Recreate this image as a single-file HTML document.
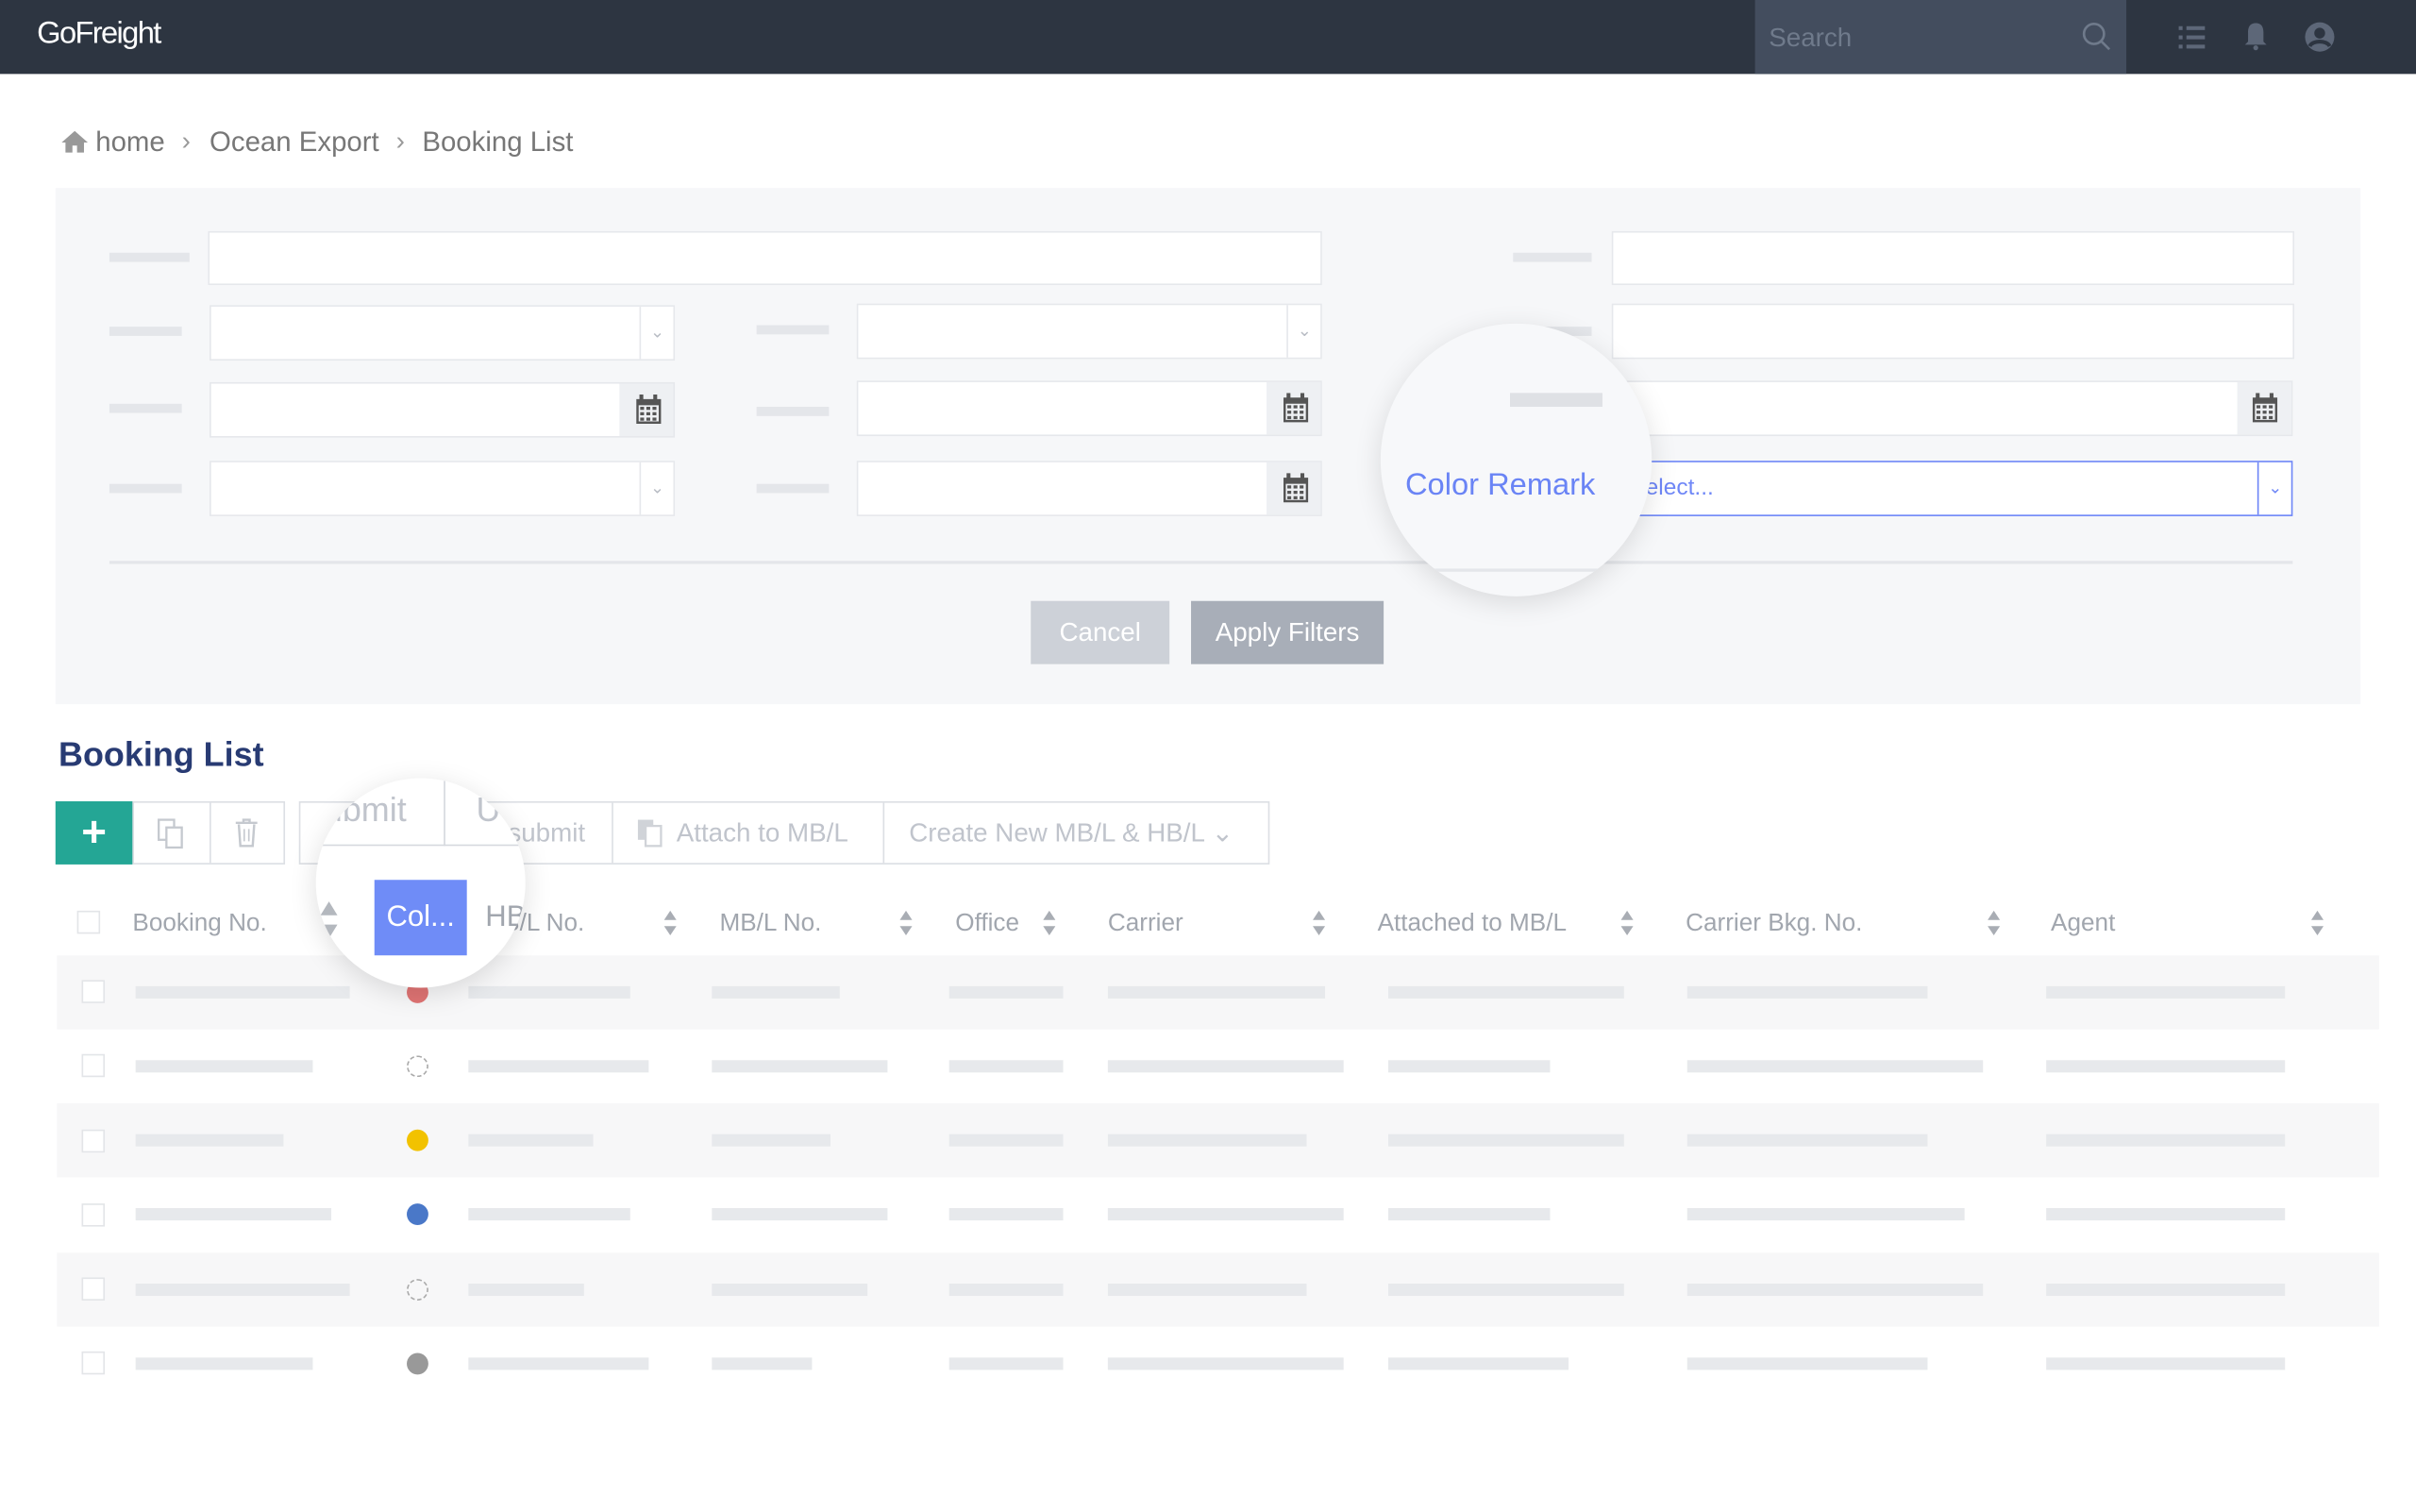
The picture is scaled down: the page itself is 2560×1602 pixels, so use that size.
<!DOCTYPE html>
<html><head><meta charset="utf-8">
<style>
html,body{margin:0;padding:0;width:2560px;height:1601px;overflow:hidden;background:#fff;}
#w{position:absolute;left:0;top:0;width:1568px;height:981px;transform:scale(1.632653);transform-origin:0 0;font-family:"Liberation Sans",sans-serif;}
.a{position:absolute;}
.bar{position:absolute;background:#e4e6ea;height:6px;}
.in{position:absolute;background:#fff;border:1px solid #e6e8ec;box-sizing:border-box;}
.dv{position:absolute;top:0;bottom:0;width:1px;background:#e6e8ec;}
.chev{position:absolute;color:#b8bcc4;font-size:11px;}
.cal{position:absolute;top:0;bottom:0;right:0;width:35px;background:#eef0f3;}
.t{position:absolute;white-space:nowrap;}
.rb{position:absolute;height:8px;background:#e7e9ec;}
.cb{position:absolute;width:15px;height:15px;border:1px solid #e3e5e8;background:#fff;box-sizing:border-box;}
.dot{position:absolute;width:14px;height:14px;border-radius:50%;}
.th{position:absolute;top:591px;color:#a1a6ae;font-size:16px;white-space:nowrap;}
.sort{position:absolute;top:589px;width:8px;height:20px;}
</style></head><body><div id="w">
<div class="a" style="left:0;top:0;width:1568px;height:48px;background:#2d3541;"></div>
<div class="t" style="left:24px;top:11px;color:#fff;font-size:20px;letter-spacing:-1px;">GoFreight</div>
<div class="a" style="left:1139px;top:0;width:241px;height:48px;background:#434d5e;"></div>
<div class="t" style="left:1148px;top:15px;color:#6f7a8b;font-size:17px;">Search</div>
<svg class="a" style="left:1350px;top:13px" width="22" height="22" viewBox="0 0 22 22"><circle cx="9" cy="9" r="6.5" fill="none" stroke="#6f7a8b" stroke-width="1.6"/><path d="M13.5 13.5L19 19" stroke="#6f7a8b" stroke-width="1.6"/></svg>
<svg class="a" style="left:1413px;top:15px" width="20" height="18"><g fill="#5d6778"><rect x="1" y="2" width="2.5" height="2.5"/><rect x="6" y="2" width="12" height="2.5"/><rect x="1" y="8" width="2.5" height="2.5"/><rect x="6" y="8" width="12" height="2.5"/><rect x="1" y="14" width="2.5" height="2.5"/><rect x="6" y="14" width="12" height="2.5"/></g></svg>
<svg class="a" style="left:1455px;top:14px" width="18" height="20"><path d="M9 1c-4 0-5 3-5 6v6l-2 2h14l-2-2V7c0-3-1-6-5-6z" fill="#5d6778"/><circle cx="9" cy="17" r="1.6" fill="#5d6778"/></svg>
<svg class="a" style="left:1495px;top:13px" width="21" height="22"><circle cx="10.5" cy="11" r="9.5" fill="#5d6778"/><circle cx="10.5" cy="8.5" r="3.5" fill="#2d3541"/><path d="M4 17c2-4 11-4 13 0" stroke="#2d3541" stroke-width="2.5" fill="none"/></svg>
<svg class="a" style="left:39px;top:84px" width="19" height="16"><path d="M9.5 1L1 8.5h2.5V15h4.5v-4.5h3V15h4.5V8.5H18z" fill="#999"/></svg>
<div class="t" style="left:62px;top:82px;color:#777;font-size:18px;">home</div>
<div class="t" style="left:118px;top:82px;color:#999;font-size:17px;">&#8250;</div>
<div class="t" style="left:136px;top:82px;color:#777;font-size:18px;">Ocean Export</div>
<div class="t" style="left:257px;top:82px;color:#999;font-size:17px;">&#8250;</div>
<div class="t" style="left:274px;top:82px;color:#777;font-size:18px;">Booking List</div>
<div class="a" style="left:36px;top:122px;width:1496px;height:335px;background:#f6f7f9;"></div>
<div class="bar" style="left:71px;top:164px;width:52px;"></div>
<div class="in" style="left:135px;top:150px;width:723px;height:35px;"></div>
<div class="bar" style="left:982px;top:164px;width:51px;"></div>
<div class="in" style="left:1046px;top:150px;width:443px;height:35px;"></div>
<div class="bar" style="left:71px;top:212px;width:47px;"></div>
<div class="in" style="left:136px;top:198px;width:302px;height:36px;"><div class="dv" style="left:278px"></div><div class="chev" style="left:285px;top:10px;">&#8964;</div></div>
<div class="bar" style="left:491px;top:211px;width:47px;"></div>
<div class="in" style="left:556px;top:197px;width:302px;height:36px;"><div class="dv" style="left:278px"></div><div class="chev" style="left:285px;top:10px;">&#8964;</div></div>
<div class="bar" style="left:982px;top:212px;width:51px;"></div>
<div class="in" style="left:1046px;top:197px;width:443px;height:36px;"></div>
<div class="bar" style="left:71px;top:262px;width:47px;"></div>
<div class="in" style="left:136px;top:248px;width:302px;height:36px;"><div class="cal"></div></div>
<div class="bar" style="left:491px;top:264px;width:47px;"></div>
<div class="in" style="left:556px;top:247px;width:302px;height:36px;"><div class="cal"></div></div>
<div class="in" style="left:1055px;top:247px;width:433px;height:36px;"><div class="cal"></div></div>
<div class="bar" style="left:71px;top:314px;width:47px;"></div>
<div class="in" style="left:136px;top:299px;width:302px;height:36px;"><div class="dv" style="left:278px"></div><div class="chev" style="left:285px;top:10px;">&#8964;</div></div>
<div class="bar" style="left:491px;top:314px;width:47px;"></div>
<div class="in" style="left:556px;top:299px;width:302px;height:36px;"><div class="cal"></div></div>
<div class="a" style="left:1060px;top:299px;width:428px;height:36px;background:#fff;border:1px solid #6f87f7;box-sizing:border-box;"><div class="dv" style="left:404px;background:#6f87f7"></div><div class="chev" style="left:411px;top:10px;color:#6f87f7">&#8964;</div></div>
<div class="t" style="left:1068px;top:308px;color:#6f87f7;font-size:15px;">elect...</div>
<svg width="0" height="0" style="position:absolute"><defs><g id="c" fill="#555"><rect x="3" y="0" width="2.5" height="5"/><rect x="12" y="0" width="2.5" height="5"/><path d="M1 3h16v16H1z M2.5 7v10.5h13V7z" fill-rule="evenodd"/><rect x="3.5" y="8" width="2.5" height="2"/><rect x="7.5" y="8" width="2.5" height="2"/><rect x="11.5" y="8" width="2.5" height="2"/><rect x="3.5" y="11.5" width="2.5" height="2"/><rect x="7.5" y="11.5" width="2.5" height="2"/><rect x="11.5" y="11.5" width="2.5" height="2"/><rect x="3.5" y="15" width="2.5" height="2"/><rect x="7.5" y="15" width="2.5" height="2"/><rect x="11.5" y="15" width="2.5" height="2"/></g><g id="s"><path d="M0 8L4 2L8 8z M0 12L4 18L8 12z" fill="#a9adb4"/></g></defs></svg>
<svg class="a" style="left:412px;top:256px" width="18" height="20"><use href="#c"/></svg>
<svg class="a" style="left:832px;top:255px" width="18" height="20"><use href="#c"/></svg>
<svg class="a" style="left:832px;top:307px" width="18" height="20"><use href="#c"/></svg>
<svg class="a" style="left:1461px;top:255px" width="18" height="20"><use href="#c"/></svg>
<div class="a" style="left:71px;top:364px;width:1417px;height:2px;background:#e4e6ea;"></div>
<div class="a" style="left:896px;top:210px;width:176px;height:177px;border-radius:50%;background:#f7f8fa;box-shadow:0 4px 18px rgba(0,0,0,0.12);overflow:hidden;">
 <div class="a" style="left:84px;top:45px;width:60px;height:9px;background:#dfe1e5;"></div>
 <div class="a" style="left:0;top:159px;width:176px;height:2px;background:#e4e6ea;"></div>
 <div class="t" style="left:16px;top:94px;color:#6a84f5;font-size:20px;">Color Remark</div>
</div>
<div class="a" style="left:669px;top:390px;width:90px;height:41px;background:#cdd1d8;color:#fff;font-size:17px;text-align:center;line-height:41px;">Cancel</div>
<div class="a" style="left:773px;top:390px;width:125px;height:41px;background:#a8aeb8;color:#fff;font-size:17px;text-align:center;line-height:41px;">Apply Filters</div>
<div class="t" style="left:38px;top:477px;color:#283b73;font-size:22px;font-weight:bold;">Booking List</div>
<div class="a" style="left:36px;top:520px;width:50px;height:41px;background:#24a695;color:#fff;font-size:28px;text-align:center;line-height:40px;font-weight:bold;">+</div>
<div class="a" style="left:86px;top:520px;width:99px;height:41px;border:1px solid #dcdfe4;box-sizing:border-box;"><div class="dv" style="left:49px;background:#dcdfe4"></div></div>
<svg class="a" style="left:102px;top:531px" width="18" height="20"><rect x="1" y="1" width="10" height="13" fill="none" stroke="#c5c9cf" stroke-width="1.4"/><rect x="6" y="6" width="10" height="13" fill="#fff" stroke="#c5c9cf" stroke-width="1.4"/></svg>
<svg class="a" style="left:152px;top:531px" width="16" height="19"><path d="M1 3h14M6 3V1h4v2M3 4l1 14h8l1-14" fill="none" stroke="#c5c9cf" stroke-width="1.5"/><path d="M6.5 7v8M9.5 7v8" stroke="#c5c9cf"/></svg>
<div class="a" style="left:194px;top:520px;width:630px;height:41px;border:1px solid #dcdfe4;box-sizing:border-box;"><div class="dv" style="left:202px;background:#dcdfe4"></div><div class="dv" style="left:378px;background:#dcdfe4"></div></div>
<div class="t" style="left:308px;top:531px;color:#c0c4cc;font-size:17px;">Unsubmit</div>
<svg class="a" style="left:413px;top:531px" width="18" height="19"><rect x="1" y="1" width="10" height="13" fill="#d0d3d8"/><rect x="6" y="5" width="10" height="13" fill="#fff" stroke="#d0d3d8" stroke-width="1.4"/></svg>
<div class="t" style="left:439px;top:531px;color:#c0c4cc;font-size:17px;">Attach to MB/L</div>
<div class="t" style="left:590px;top:531px;color:#c0c4cc;font-size:17px;">Create New MB/L &amp; HB/L &#8964;</div>
<div class="cb" style="left:50px;top:591px;"></div>
<div class="th" style="left:86px;">Booking No.</div>
<div class="th" style="left:315px;">HB/L No.</div>
<div class="th" style="left:467px;">MB/L No.</div>
<div class="th" style="left:620px;">Office</div>
<div class="th" style="left:719px;">Carrier</div>
<div class="th" style="left:894px;">Attached to MB/L</div>
<div class="th" style="left:1094px;">Carrier Bkg. No.</div>
<div class="th" style="left:1331px;">Agent</div>
<svg class="sort" style="left:431px"><use href="#s"/></svg>
<svg class="sort" style="left:584px"><use href="#s"/></svg>
<svg class="sort" style="left:677px"><use href="#s"/></svg>
<svg class="sort" style="left:852px"><use href="#s"/></svg>
<svg class="sort" style="left:1052px"><use href="#s"/></svg>
<svg class="sort" style="left:1290px"><use href="#s"/></svg>
<svg class="sort" style="left:1500px"><use href="#s"/></svg>
<div class="a" style="left:37px;top:620px;width:1507px;height:48px;background:#f7f7f8;"></div>
<div class="a" style="left:37px;top:716px;width:1507px;height:48px;background:#f7f7f8;"></div>
<div class="a" style="left:37px;top:813px;width:1507px;height:48px;background:#f7f7f8;"></div>
<div class="cb" style="left:53px;top:636px"></div><div class="rb" style="left:88px;top:640px;width:139px"></div><div class="dot" style="left:264px;top:637px;background:#e07474"></div><div class="rb" style="left:304px;top:640px;width:105px"></div><div class="rb" style="left:462px;top:640px;width:83px"></div><div class="rb" style="left:616px;top:640px;width:74px"></div><div class="rb" style="left:719px;top:640px;width:141px"></div><div class="rb" style="left:901px;top:640px;width:153px"></div><div class="rb" style="left:1095px;top:640px;width:156px"></div><div class="rb" style="left:1328px;top:640px;width:155px"></div>
<div class="cb" style="left:53px;top:684px"></div><div class="rb" style="left:88px;top:688px;width:115px"></div><div class="dot" style="left:264px;top:685px;border:1px dashed #aaa;box-sizing:border-box"></div><div class="rb" style="left:304px;top:688px;width:117px"></div><div class="rb" style="left:462px;top:688px;width:114px"></div><div class="rb" style="left:616px;top:688px;width:74px"></div><div class="rb" style="left:719px;top:688px;width:153px"></div><div class="rb" style="left:901px;top:688px;width:105px"></div><div class="rb" style="left:1095px;top:688px;width:192px"></div><div class="rb" style="left:1328px;top:688px;width:155px"></div>
<div class="cb" style="left:53px;top:733px"></div><div class="rb" style="left:88px;top:736px;width:96px"></div><div class="dot" style="left:264px;top:733px;background:#f2c200"></div><div class="rb" style="left:304px;top:736px;width:81px"></div><div class="rb" style="left:462px;top:736px;width:77px"></div><div class="rb" style="left:616px;top:736px;width:74px"></div><div class="rb" style="left:719px;top:736px;width:129px"></div><div class="rb" style="left:901px;top:736px;width:153px"></div><div class="rb" style="left:1095px;top:736px;width:156px"></div><div class="rb" style="left:1328px;top:736px;width:155px"></div>
<div class="cb" style="left:53px;top:781px"></div><div class="rb" style="left:88px;top:784px;width:127px"></div><div class="dot" style="left:264px;top:781px;background:#4a78c8"></div><div class="rb" style="left:304px;top:784px;width:105px"></div><div class="rb" style="left:462px;top:784px;width:114px"></div><div class="rb" style="left:616px;top:784px;width:74px"></div><div class="rb" style="left:719px;top:784px;width:153px"></div><div class="rb" style="left:901px;top:784px;width:105px"></div><div class="rb" style="left:1095px;top:784px;width:180px"></div><div class="rb" style="left:1328px;top:784px;width:155px"></div>
<div class="cb" style="left:53px;top:829px"></div><div class="rb" style="left:88px;top:833px;width:139px"></div><div class="dot" style="left:264px;top:830px;border:1px dashed #aaa;box-sizing:border-box"></div><div class="rb" style="left:304px;top:833px;width:75px"></div><div class="rb" style="left:462px;top:833px;width:101px"></div><div class="rb" style="left:616px;top:833px;width:74px"></div><div class="rb" style="left:719px;top:833px;width:129px"></div><div class="rb" style="left:901px;top:833px;width:153px"></div><div class="rb" style="left:1095px;top:833px;width:192px"></div><div class="rb" style="left:1328px;top:833px;width:155px"></div>
<div class="cb" style="left:53px;top:877px"></div><div class="rb" style="left:88px;top:881px;width:115px"></div><div class="dot" style="left:264px;top:878px;background:#999"></div><div class="rb" style="left:304px;top:881px;width:117px"></div><div class="rb" style="left:462px;top:881px;width:65px"></div><div class="rb" style="left:616px;top:881px;width:74px"></div><div class="rb" style="left:719px;top:881px;width:153px"></div><div class="rb" style="left:901px;top:881px;width:117px"></div><div class="rb" style="left:1095px;top:881px;width:156px"></div><div class="rb" style="left:1328px;top:881px;width:155px"></div>
<div class="a" style="left:205px;top:505px;width:136px;height:136px;border-radius:50%;background:#fff;box-shadow:0 4px 18px rgba(0,0,0,0.13);overflow:hidden;">
 <div class="a" style="left:-20px;top:-2px;width:180px;height:46px;border:1px solid #d6d9de;box-sizing:border-box;"></div>
 <div class="a" style="left:83px;top:-2px;width:1px;height:46px;background:#d6d9de;"></div>
 <div class="t" style="left:5px;top:8px;color:#c0c4cc;font-size:22px;">ubmit</div>
 <div class="t" style="left:104px;top:8px;color:#c0c4cc;font-size:22px;">U</div>
 <svg class="a" style="left:3px;top:78px" width="11" height="28"><path d="M0 11L5.5 2L11 11z M0 17L5.5 26L11 17z" fill="#b4b8be"/></svg>
 <div class="a" style="left:38px;top:66px;width:60px;height:49px;background:#6f8cf7;color:#fff;font-size:19px;line-height:49px;text-align:center;">Col...</div>
 <div class="t" style="left:110px;top:80px;color:#a1a6ae;font-size:19px;">HB</div>
</div>
</div></body></html>
